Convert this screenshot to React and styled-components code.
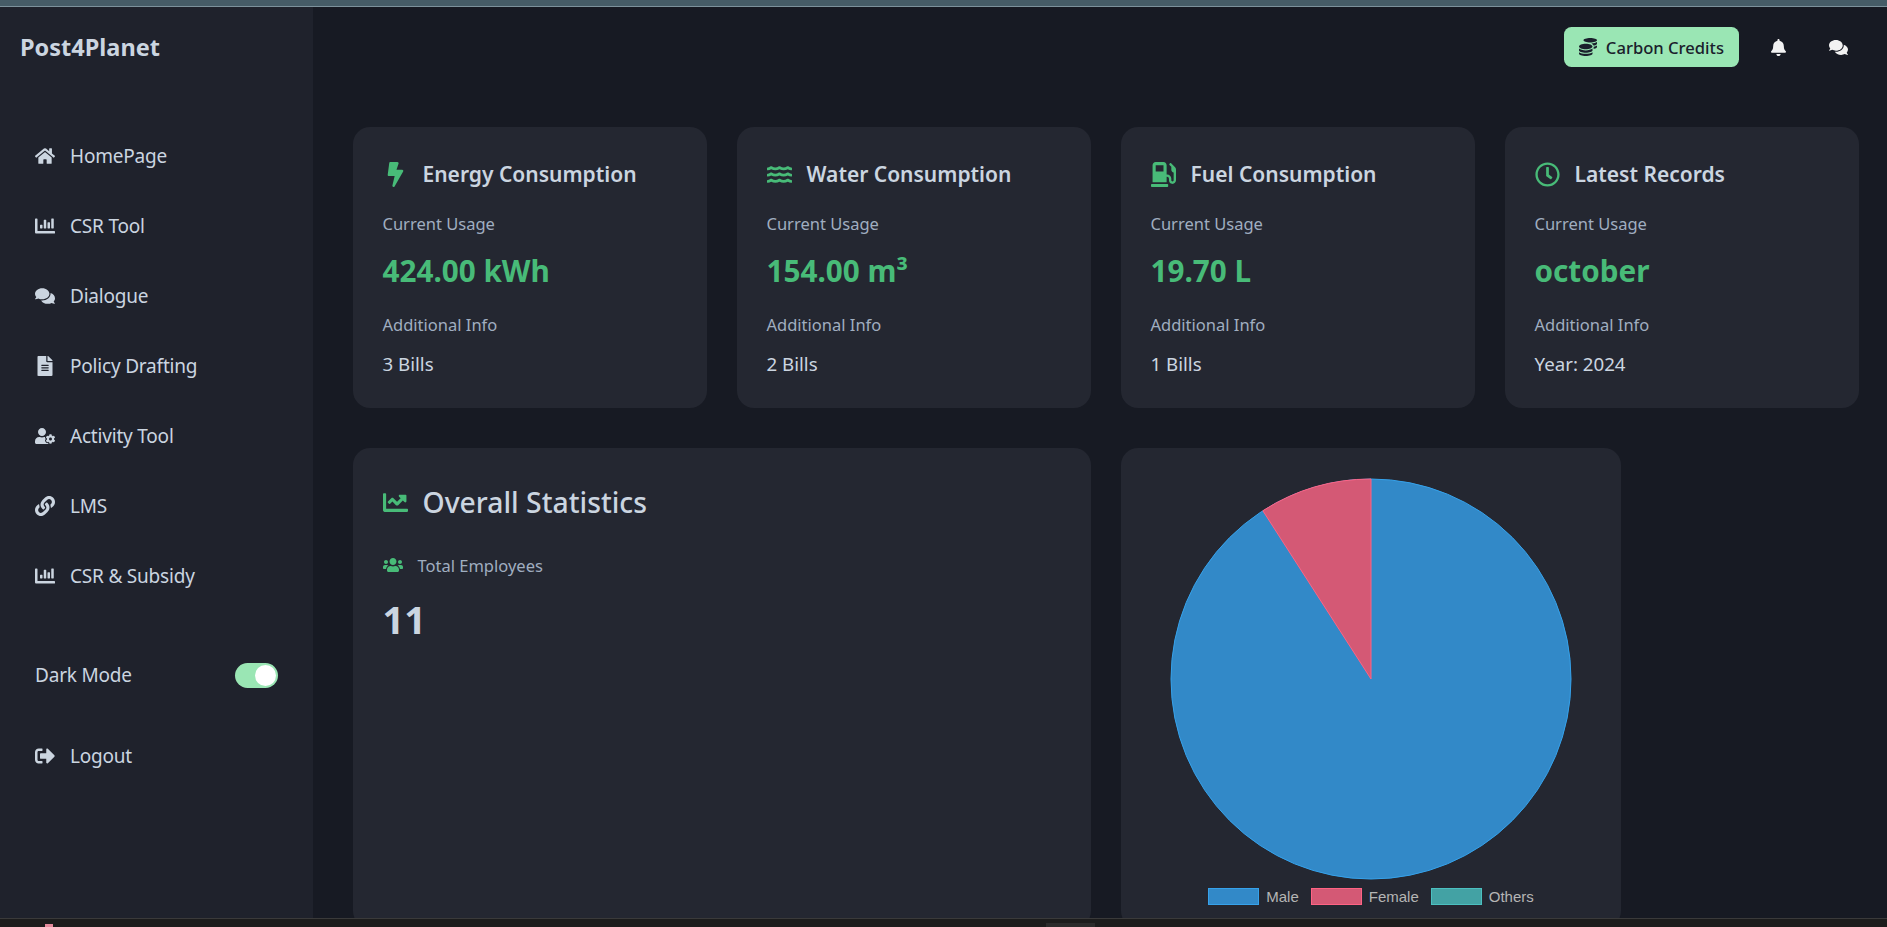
import React from 'react';
import styled, { createGlobalStyle } from 'styled-components';
import {
  FaBell,
  FaBolt,
  FaChartBar,
  FaChartLine,
  FaCoins,
  FaComments,
  FaFileAlt,
  FaGasPump,
  FaHome,
  FaLink,
  FaRegClock,
  FaSignOutAlt,
  FaUserCog,
  FaUsers,
  FaWater,
} from 'react-icons/fa';

const GlobalStyle = createGlobalStyle`
  html, body {
    margin: 0;
    padding: 0;
    height: 100%;
    overflow: hidden;
    background: #171a23;
    font-family: "Noto Sans", "Open Sans", sans-serif;
  }
`;

const Page = styled.div`
  display: flex;
  flex-direction: column;
  height: 927px;
  overflow: hidden;
`;

const TopStrip = styled.div`
  flex: none;
  height: 6px;
  background: #465c67;
  border-bottom: 1px solid #7d929c;
`;

const BottomStrip = styled.div`
  flex: none;
  display: flex;
  align-items: flex-end;
  height: 8px;
  background: #1c1c1c;
  border-top: 1px solid #3a3a3a;
`;

const TrayMark = styled.span`
  width: 8px;
  height: 3px;
  margin: 0 0 0 45px;
  background: #e58a9c;
`;

const TrayTab = styled.span`
  width: 49px;
  height: 4px;
  margin-left: 993px;
  background: #2b2b2b;
`;

const Shell = styled.div`
  flex: 1;
  min-height: 0;
  display: flex;
`;

const Sidebar = styled.aside`
  flex: none;
  width: 313px;
  box-sizing: border-box;
  background: #1f222c;
  color: #cbd5e0;
  padding: 0 35px 0 20px;
`;

const Logo = styled.div`
  height: 80px;
  line-height: 80px;
  font-size: 23.5px;
  font-weight: 700;
  margin-bottom: 34px;
`;

const Nav = styled.nav`
  display: flex;
  flex-direction: column;
  padding-left: 15px;
`;

const NavItem = styled.a`
  display: flex;
  align-items: center;
  gap: 15px;
  height: 70px;
  font-size: 19px;
  letter-spacing: -0.2px;
  color: #cbd5e0;

  svg {
    width: 20px;
    height: 20px;
    flex: none;
  }
`;

const ModeRow = styled.div`
  display: flex;
  align-items: center;
  justify-content: space-between;
  height: 44px;
  margin: 42px 0 24px;
  font-size: 19px;
  letter-spacing: -0.2px;
`;

const Toggle = styled.span`
  display: flex;
  justify-content: flex-end;
  align-items: center;
  box-sizing: border-box;
  width: 43px;
  height: 25px;
  padding: 2px;
  border-radius: 13px;
  background: #9ae6b4;

  &::after {
    content: '';
    width: 21px;
    height: 21px;
    border-radius: 50%;
    background: #fff;
  }
`;

const Main = styled.main`
  flex: 1;
  min-width: 0;
  display: flex;
  flex-direction: column;
  padding: 0 28px 0 40px;
`;

const Header = styled.header`
  flex: none;
  display: flex;
  justify-content: flex-end;
  align-items: center;
  height: 80px;
  margin: 0 -28px 40px 0;
  padding: 0 39px 0 0;
  gap: 40px;
`;

const CreditsButton = styled.button`
  display: flex;
  align-items: center;
  gap: 9px;
  height: 40px;
  padding: 0 15px;
  margin-right: -11px;
  border: none;
  border-radius: 7.5px;
  background: #9ae6b4;
  color: #1a202c;
  font-family: inherit;
  font-size: 16.6px;
  font-weight: 500;

  svg {
    width: 18px;
    height: 18px;
  }
`;

const HeaderIcon = styled.span`
  display: flex;
  width: 20px;
  justify-content: center;
  color: #f2f2f2;
`;

const CardRow = styled.section`
  flex: none;
  display: grid;
  grid-template-columns: repeat(4, 354px);
  gap: 30px;
`;

const Card = styled.article`
  box-sizing: border-box;
  height: 281px;
  padding: 30px 29px 29px 29.5px;
  border-radius: 17px;
  background: #242731;
`;

const CardTitle = styled.h2`
  display: flex;
  align-items: center;
  gap: 15px;
  height: 34px;
  margin: 0 0 18px;
  font-size: 21px;
  font-weight: 600;
  color: #cbd5e0;

  svg {
    flex: none;
    width: 25px;
    height: 25px;
    color: #48bb78;
  }
`;

const Label = styled.div`
  height: 30px;
  line-height: 30px;
  font-size: 16.5px;
  color: #a0aec0;
`;

const Value = styled.div`
  height: 50px;
  line-height: 50px;
  margin: 7px 0 14px;
  font-size: 29.7px;
  font-weight: 700;
  color: #48bb78;
`;

const Detail = styled.div`
  height: 30px;
  line-height: 30px;
  margin-top: 9px;
  font-size: 18.7px;
  color: #cbd5e0;
`;

const LowerRow = styled.section`
  flex: none;
  display: flex;
  gap: 30px;
  margin-top: 40px;
  height: 480px;
`;

const StatsPanel = styled.article`
  box-sizing: border-box;
  width: 738px;
  padding: 30px 29px 30px 29.5px;
  border-radius: 17px;
  background: #242731;
`;

const StatsTitle = styled.h2`
  display: flex;
  align-items: center;
  gap: 15px;
  height: 48px;
  margin: 0 0 26px;
  font-size: 28.3px;
  font-weight: 500;
  color: #cbd5e0;

  svg {
    width: 25px;
    height: 25px;
    color: #48bb78;
  }
`;

const StatLabel = styled.div`
  display: flex;
  align-items: center;
  gap: 15px;
  height: 26px;
  font-size: 16.5px;
  color: #a0aec0;

  svg {
    width: 20px;
    height: 20px;
    color: #48bb78;
  }
`;

const StatValue = styled.div`
  height: 60px;
  line-height: 60px;
  margin-top: 11px;
  font-size: 38px;
  font-weight: 700;
  color: #cbd5e0;
`;

const ChartCard = styled.article`
  box-sizing: border-box;
  width: 500px;
  padding-top: 30px;
  border-radius: 17px;
  background: #242731;
  display: flex;
  flex-direction: column;
  align-items: center;
`;

const Pie = styled.svg`
  display: block;
  width: 402px;
  height: 402px;
`;

const Legend = styled.ul`
  display: flex;
  align-items: center;
  gap: 12px;
  margin: 8px 0 0;
  padding: 0;
  list-style: none;
  font-family: "Liberation Sans", Arial, sans-serif;
  font-size: 15px;
  color: #b5b5b5;
`;

const LegendItem = styled.li`
  display: flex;
  align-items: center;
  gap: 7px;
`;

const Swatch = styled.span`
  display: block;
  box-sizing: border-box;
  width: 51px;
  height: 17px;
  background: ${(p) => p.$fill};
  border: 1px solid ${(p) => p.$line};
`;

const navItems = [
  { label: 'HomePage', icon: FaHome },
  { label: 'CSR Tool', icon: FaChartBar },
  { label: 'Dialogue', icon: FaComments },
  { label: 'Policy Drafting', icon: FaFileAlt },
  { label: 'Activity Tool', icon: FaUserCog },
  { label: 'LMS', icon: FaLink },
  { label: 'CSR & Subsidy', icon: FaChartBar },
];

const cards = [
  { title: 'Energy Consumption', icon: FaBolt, value: '424.00 kWh', detail: '3 Bills' },
  { title: 'Water Consumption', icon: FaWater, value: '154.00 m³', detail: '2 Bills' },
  { title: 'Fuel Consumption', icon: FaGasPump, value: '19.70 L', detail: '1 Bills' },
  { title: 'Latest Records', icon: FaRegClock, value: 'october', detail: 'Year: 2024' },
];

const legend = [
  { label: 'Male', fill: '#3289c8', line: '#36a2eb' },
  { label: 'Female', fill: '#d45975', line: '#ff6384' },
  { label: 'Others', fill: '#43a2a4', line: '#4bc0c0' },
];

// 10 of 11 employees are male, the slice runs counter-clockwise from the top
const femaleAngle = (2 * Math.PI) / 11;
const sliceX = 201 - 200 * Math.sin(femaleAngle);
const sliceY = 201 - 200 * Math.cos(femaleAngle);

export default function App() {
  return (
    <Page>
      <GlobalStyle />
      <TopStrip />
      <Shell>
        <Sidebar>
          <Logo>Post4Planet</Logo>
          <Nav>
            {navItems.map(({ label, icon: Icon }) => (
              <NavItem key={label}>
                <Icon />
                {label}
              </NavItem>
            ))}
            <ModeRow>
              Dark Mode
              <Toggle />
            </ModeRow>
            <NavItem>
              <FaSignOutAlt />
              Logout
            </NavItem>
          </Nav>
        </Sidebar>
        <Main>
          <Header>
            <CreditsButton>
              <FaCoins />
              Carbon Credits
            </CreditsButton>
            <HeaderIcon>
              <FaBell size={17} />
            </HeaderIcon>
            <HeaderIcon>
              <FaComments size={19} />
            </HeaderIcon>
          </Header>
          <CardRow>
            {cards.map(({ title, icon: Icon, value, detail }) => (
              <Card key={title}>
                <CardTitle>
                  <Icon />
                  {title}
                </CardTitle>
                <Label>Current Usage</Label>
                <Value>{value}</Value>
                <Label>Additional Info</Label>
                <Detail>{detail}</Detail>
              </Card>
            ))}
          </CardRow>
          <LowerRow>
            <StatsPanel>
              <StatsTitle>
                <FaChartLine />
                Overall Statistics
              </StatsTitle>
              <StatLabel>
                <FaUsers />
                Total Employees
              </StatLabel>
              <StatValue>11</StatValue>
            </StatsPanel>
            <ChartCard>
              <Pie viewBox="0 0 402 402">
                <circle cx="201" cy="201" r="200" fill="#3289c8" stroke="#36a2eb" />
                <path
                  d={`M201 201 L${sliceX} ${sliceY} A200 200 0 0 1 201 1 Z`}
                  fill="#d45975"
                  stroke="#ff6384"
                />
              </Pie>
              <Legend>
                {legend.map((item) => (
                  <LegendItem key={item.label}>
                    <Swatch $fill={item.fill} $line={item.line} />
                    {item.label}
                  </LegendItem>
                ))}
              </Legend>
            </ChartCard>
          </LowerRow>
        </Main>
      </Shell>
      <BottomStrip>
        <TrayMark />
        <TrayTab />
      </BottomStrip>
    </Page>
  );
}
